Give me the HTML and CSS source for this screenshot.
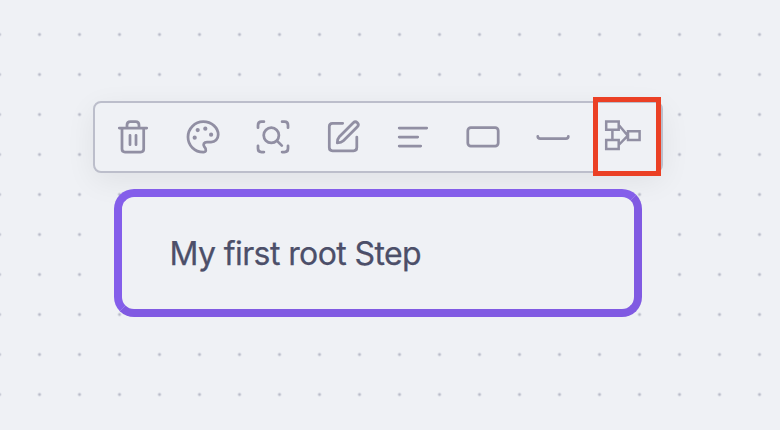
FILE: index.html
```html
<!DOCTYPE html>
<html lang="en">
<head>
<meta charset="utf-8">
<title>Step editor</title>
<link rel="stylesheet" href="styles.css">
</head>
<body>
<main class="canvas">
  <div class="toolbar">
    <button class="tool" aria-label="Delete"><svg viewBox="0 0 40 40"><path d="M6.3 11H33.7M9 11V32q0 3 3 3H27.7q3 0 3-3V11M14 11V8q0-3.4 3.4-3.4H22.6Q26 4.6 26 8V11M17 18.3V27.7M23 18.3V27.7"/></svg></button>
    <button class="tool" aria-label="Color"><svg viewBox="0 0 40 40"><path d="M20.3 35.2C11.6 35.2 5 28.4 5 20S11.8 4.7 20.3 4.7 35.2 10.8 35.2 17.7C35.2 22 32 25 28 25H24C20.9 25 19.9 27.5 21.2 29.5 24 32.5 23 35.2 20.3 35.2Z"/><g class="solid"><circle cx="11.7" cy="20.7" r="2.1"/><circle cx="14.7" cy="13.1" r="2.1"/><circle cx="22.3" cy="11.7" r="2.1"/><circle cx="28.1" cy="17.7" r="2.1"/></g></svg></button>
    <button class="tool" aria-label="Focus"><svg viewBox="0 0 40 40"><path d="M5 10.7V8.2Q5 4.7 8.5 4.7H10.9M29.1 4.7H31.5Q35 4.7 35 8.2V10.7M35 28.8V31.5Q35 35 31.5 35H29.1M10.9 35H8.5Q5 35 5 31.5V28.8M23.8 23.6L28.8 28.6"/><circle cx="18.3" cy="18.3" r="7.6"/></svg></button>
    <button class="tool" aria-label="Edit"><svg viewBox="0 0 40 40"><path d="M19.7 6.3H9.5Q6.3 6.3 6.3 9.5V30.6Q6.3 33.8 9.5 33.8H30.6Q33.8 33.8 33.8 30.6V20M30.3 5.7a2.9 2.9 0 0 1 4.1 4.1L20.4 23.8c-1.3 1.3-3.4 2-6.1 2.1.1-2.7.7-4.8 2-6.1z"/></svg></button>
    <button class="tool" aria-label="Align text"><svg viewBox="0 0 40 40"><path d="M6.2 11H33.7M6.2 20H24.7M6.2 29H27.7"/></svg></button>
    <button class="tool" aria-label="Shape"><svg viewBox="0 0 40 40"><rect x="4.8" y="10.7" width="30.4" height="18.4" rx="3"/></svg></button>
    <button class="tool" aria-label="Underline"><svg viewBox="0 0 40 40"><path d="M4.8 19.4Q4.8 21.5 7.3 21.5H32.9Q35.3 21.5 35.3 19.4"/></svg></button>
    <button class="tool" aria-label="Layout"><svg class="sharp" viewBox="0 0 40 40"><path d="M3.2 4.5H15.7V12.8H3.2ZM3.2 23.1H15.7V31.9H3.2ZM25 14.3H36.6V23H25ZM9.4 12.8V22.9M16.2 8.5L24.8 18.6L16.2 27.5"/></svg><span class="highlight"></span></button>
  </div>
  <section class="node">My first root Step</section>
</main>
</body>
</html>
```
FILE: styles.css
```css
* { box-sizing: border-box; }

body {
  margin: 0;
  background: #eff1f5;
  font-family: Inter, "Liberation Sans", sans-serif;
}

.canvas {
  display: flex;
  flex-direction: column;
  align-items: flex-start;
  gap: 16px;
  height: 430px;
  padding: 101px 0 0 93px;
  overflow: hidden;
  background: radial-gradient(circle, #b8bac8 1.2px, transparent 1.8px) 19.5px 14.5px / 40px 40px;
}

.toolbar {
  display: flex;
  align-items: center;
  width: 570px;
  height: 72px;
  padding: 0 3px;
  border: 2px solid #bcbecb;
  border-radius: 8px;
  background: #eff1f5;
  box-shadow: 0 8px 30px rgba(0, 0, 0, .065);
}

.tool {
  position: relative;
  display: grid;
  place-items: center;
  width: 70px;
  height: 68px;
  padding: 0;
  border: 0;
  background: none;
}

.tool svg {
  width: 40px;
  height: 40px;
  fill: none;
  stroke: #918fa3;
  stroke-width: 2.75;
  stroke-linecap: round;
  stroke-linejoin: round;
}

.tool .solid { fill: #918fa3; stroke: none; }

.tool .sharp { stroke-width: 2.5; stroke-linecap: butt; stroke-linejoin: miter; }

.highlight {
  position: absolute;
  top: -6px;
  left: 5px;
  width: 68px;
  height: 79px;
  border: 5px solid #eb4025;
}

.node {
  display: flex;
  align-items: center;
  width: 528px;
  height: 128px;
  margin-left: 21px;
  padding-left: 47.5px;
  border: 8px solid #845eea;
  border-right-color: #805ae2;
  border-bottom-color: #805ae2;
  border-radius: 20px;
  background: #eff1f5;
  color: #4c4f69;
  font-size: 32px;
  letter-spacing: -.6px;
  white-space: nowrap;
  -webkit-text-stroke: .25px #4c4f69;
}
```
